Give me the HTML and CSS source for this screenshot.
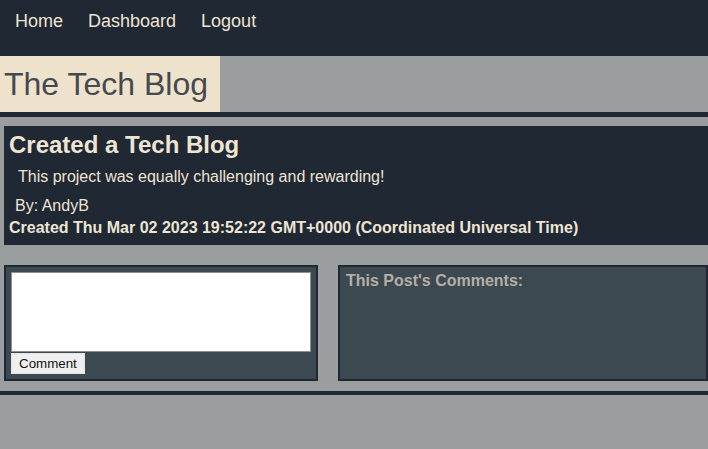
FILE: index.html
```html
<!DOCTYPE html>
<html lang="en">
<head>
<meta charset="utf-8">
<title>The Tech Blog</title>
<link rel="stylesheet" href="styles.css">
</head>
<body>
<nav class="nav">
  <a class="nav-link" href="#">Home</a>
  <a class="nav-link" href="#">Dashboard</a>
  <a class="nav-link" href="#">Logout</a>
</nav>
<header class="site-header">
  <h1 class="brand">The Tech Blog</h1>
</header>
<main class="main">
  <article class="post">
    <h2 class="post-title">Created a Tech Blog</h2>
    <p class="post-body">This project was equally challenging and rewarding!</p>
    <p class="post-author">By: AndyB</p>
    <p class="post-date">Created Thu Mar 02 2023 19:52:22 GMT+0000 (Coordinated Universal Time)</p>
  </article>
  <section class="comments-row">
    <form class="comment-form">
      <textarea class="comment-input"></textarea>
      <button class="comment-btn" type="button">Comment</button>
    </form>
    <div class="comments-list">
      <h3 class="comments-heading">This Post's Comments:</h3>
    </div>
  </section>
</main>
<footer class="footer"></footer>
</body>
</html>
```
FILE: styles.css
```css
html, body {
  margin: 0;
  padding: 0;
}
body {
  background: #9a9e9f;
  font-family: "Liberation Sans", Arial, sans-serif;
  min-height: 449px;
}
.nav {
  box-sizing: border-box;
  height: 56px;
  background: #1f2833;
  padding: 11px 15px 10px;
  display: flex;
  gap: 25px;
}
.nav-link {
  color: #eee4d3;
  text-decoration: none;
  font-size: 18px;
  line-height: 21px;
}
.site-header {
  height: 56px;
  border-bottom: 5px solid #1f2833;
}
.brand {
  display: inline-block;
  margin: 0;
  height: 56px;
  line-height: 56px;
  padding: 0 12px 0 4px;
  background: #eee2cd;
  color: #45494d;
  font-size: 32px;
  font-weight: normal;
}
.main {
  padding: 9px 0 10px 4px;
}
.post {
  background: #1f2833;
  color: #eee4d3;
  padding: 5px 5px 8px 5px;
}
.post-title {
  margin: 0;
  font-size: 24px;
  line-height: 28px;
  font-weight: bold;
}
.post-body {
  margin: 9px 0 0;
  padding-left: 9px;
  font-size: 16px;
  line-height: 18px;
}
.post-author {
  margin: 11px 0 0;
  padding-left: 6px;
  font-size: 16px;
  line-height: 18px;
}
.post-date {
  margin: 4px 0 0;
  font-size: 16px;
  line-height: 18px;
  font-weight: bold;
}
.comments-row {
  display: flex;
  gap: 20px;
  margin-top: 20px;
}
.comment-form {
  box-sizing: border-box;
  width: 314px;
  margin: 0;
  padding: 5px;
  background: #3d4951;
  border: 2px solid #1f2833;
}
.comment-input {
  display: block;
  box-sizing: border-box;
  width: 300px;
  height: 80px;
  margin: 0;
  background: #ffffff;
  border: 1px solid #8d9194;
  resize: none;
}
.comment-btn {
  display: block;
  box-sizing: border-box;
  height: 21px;
  margin-top: 1px;
  padding: 1px 7px;
  background: #efefef;
  border: 1px solid #e4e4e4;
  border-radius: 0;
  color: #111;
  font-family: "Liberation Sans", Arial, sans-serif;
  font-size: 13.33px;
  line-height: 15px;
}
.comments-list {
  flex: 1;
  padding: 5px 6px;
  background: #3d4951;
  border: 2px solid #1f2833;
}
.comments-heading {
  margin: 0;
  color: #b5afa6;
  font-size: 16px;
  line-height: 18px;
  font-weight: bold;
}
.footer {
  border-top: 4px solid #1f2833;
}
```
